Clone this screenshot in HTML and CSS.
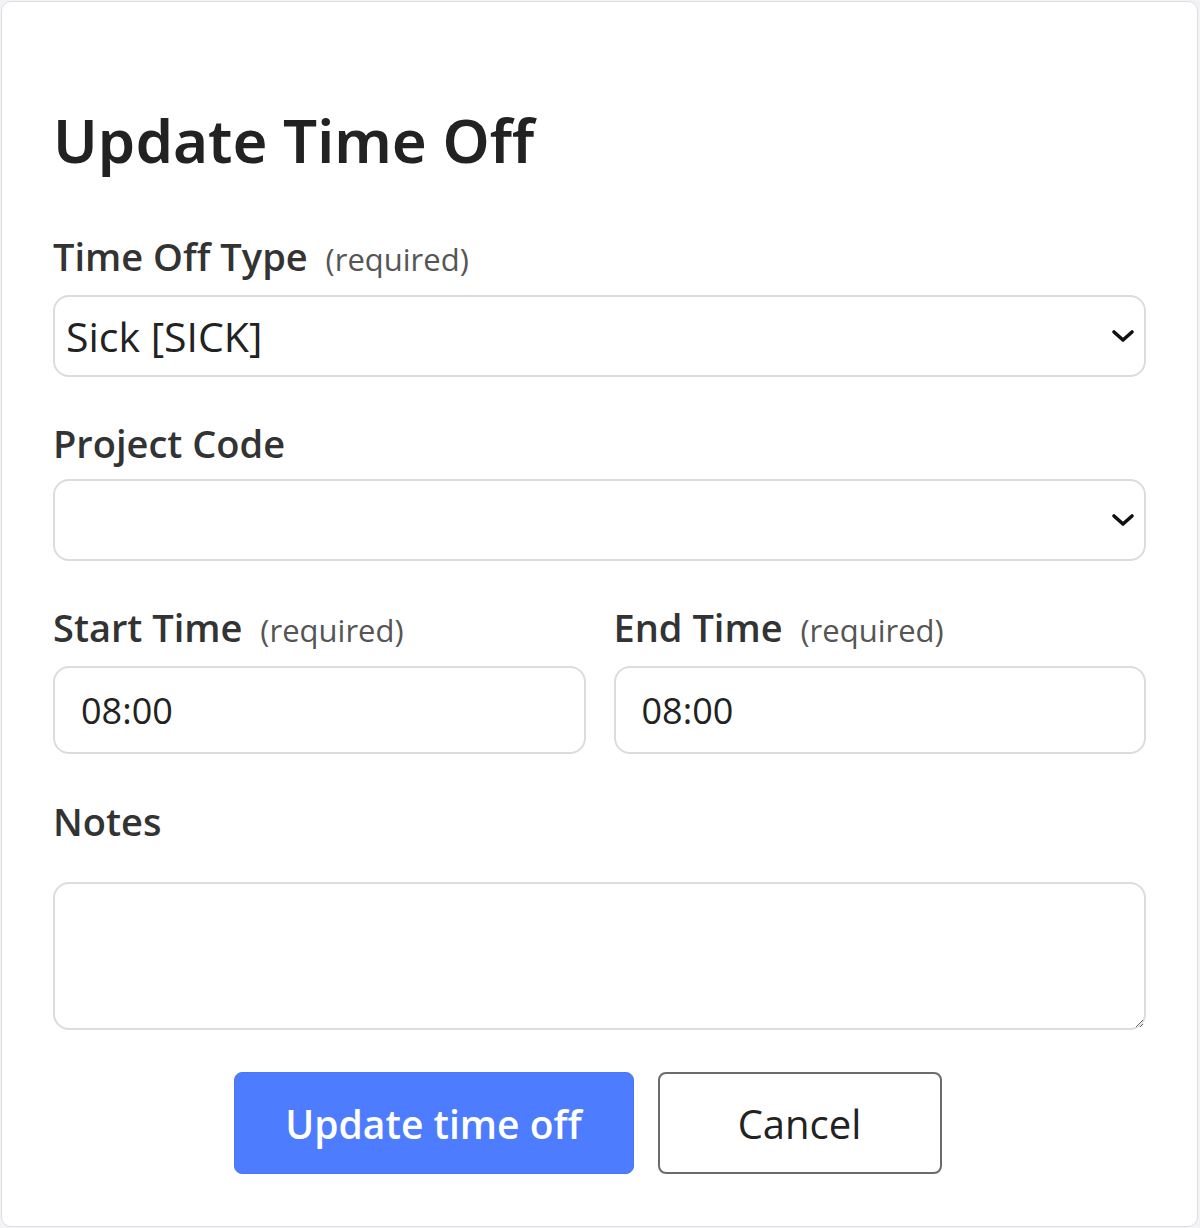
FILE: index.html
```html
<!DOCTYPE html>
<html lang="en">
<head>
<meta charset="utf-8">
<title>Update Time Off</title>
<link rel="stylesheet" href="styles.css">
</head>
<body>
<div class="card">
  <h1 class="title">Update Time Off</h1>
  <form class="form">
    <div class="field">
      <label class="label">Time Off Type <span class="req">(required)</span></label>
      <div class="select-wrap">
        <select class="control select"><option>Sick [SICK]</option></select>
        <svg class="chev" viewBox="0 0 24 14" width="24" height="14"><path d="M3 3 L12 11 L21 3" fill="none" stroke="#111" stroke-width="3.6" stroke-linecap="round" stroke-linejoin="round"/></svg>
      </div>
    </div>
    <div class="field">
      <label class="label">Project Code</label>
      <div class="select-wrap">
        <select class="control select"><option></option></select>
        <svg class="chev" viewBox="0 0 24 14" width="24" height="14"><path d="M3 3 L12 11 L21 3" fill="none" stroke="#111" stroke-width="3.6" stroke-linecap="round" stroke-linejoin="round"/></svg>
      </div>
    </div>
    <div class="row">
      <div class="field">
        <label class="label">Start Time <span class="req">(required)</span></label>
        <input class="control input" type="text" value="08:00">
      </div>
      <div class="field">
        <label class="label">End Time <span class="req">(required)</span></label>
        <input class="control input" type="text" value="08:00">
      </div>
    </div>
    <div class="field notes">
      <label class="label">Notes</label>
      <textarea class="control textarea"></textarea>
    </div>
    <div class="actions">
      <button type="button" class="btn primary">Update time off</button>
      <button type="button" class="btn secondary">Cancel</button>
    </div>
  </form>
</div>
</body>
</html>
```
FILE: styles.css
```css
html, body {
  margin: 0;
  padding: 0;
  background: #f3f3f6;
}
body {
  font-family: "Open Sans", "Noto Sans", sans-serif;
  color: #2a2a2a;
}
.card {
  box-sizing: border-box;
  margin: 1px 0 0 1px;
  width: 1197px;
  height: 1226px;
  background: #ffffff;
  border: 1px solid #dedee4;
  border-radius: 10px;
  padding: 100px 51px 0 51px;
}
.title {
  margin: 0;
  font-family: "Noto Sans", "Open Sans", sans-serif;
  font-size: 60px;
  line-height: 76px;
  font-weight: 600;
  color: #222;
}
.form {
  margin-top: 54px;
}
.field {
  display: flex;
  flex-direction: column;
  margin-bottom: 42px;
}
.label {
  font-size: 38px;
  line-height: 48px;
  font-weight: 600;
  color: #333;
  margin-bottom: 12px;
}
.req {
  font-size: 31px;
  font-weight: 400;
  color: #555;
  margin-left: 8px;
}
.control {
  box-sizing: border-box;
  width: 100%;
  border: 2px solid #dcdcdc;
  border-radius: 16px;
  background: #fff;
  font-family: "Open Sans", "Noto Sans", sans-serif;
  color: #222;
  outline: none;
}
.select-wrap {
  position: relative;
}
.select {
  -webkit-appearance: none;
  appearance: none;
  height: 82px;
  padding: 0 60px 0 11px;
  font-size: 41px;
}
.chev {
  position: absolute;
  right: 11px;
  top: 34px;
}
.row {
  display: grid;
  grid-template-columns: 1fr 1fr;
  column-gap: 28px;
}
.row .field {
  margin-bottom: 43px;
}
.input {
  height: 88px;
  padding: 0 26px;
  font-size: 36px;
}
.notes .label {
  margin-bottom: 37px;
}
.textarea {
  height: 148px;
  resize: both;
  padding: 12px;
  font-size: 32px;
}
.notes {
  margin-bottom: 42px;
}
.actions {
  display: flex;
  justify-content: center;
  gap: 24px;
  padding-right: 24px;
}
.btn {
  box-sizing: border-box;
  height: 102px;
  font-family: "Open Sans", "Noto Sans", sans-serif;
  cursor: pointer;
}
.primary {
  width: 400px;
  background: #4d7cfe;
  border: 1px solid #4a78f5;
  border-radius: 8px;
  color: #fff;
  font-size: 39px;
  font-weight: 600;
}
.secondary {
  width: 284px;
  background: #fff;
  border: 2px solid #6b6b6b;
  border-radius: 8px;
  color: #222;
  font-size: 40px;
  font-weight: 500;
}
```
